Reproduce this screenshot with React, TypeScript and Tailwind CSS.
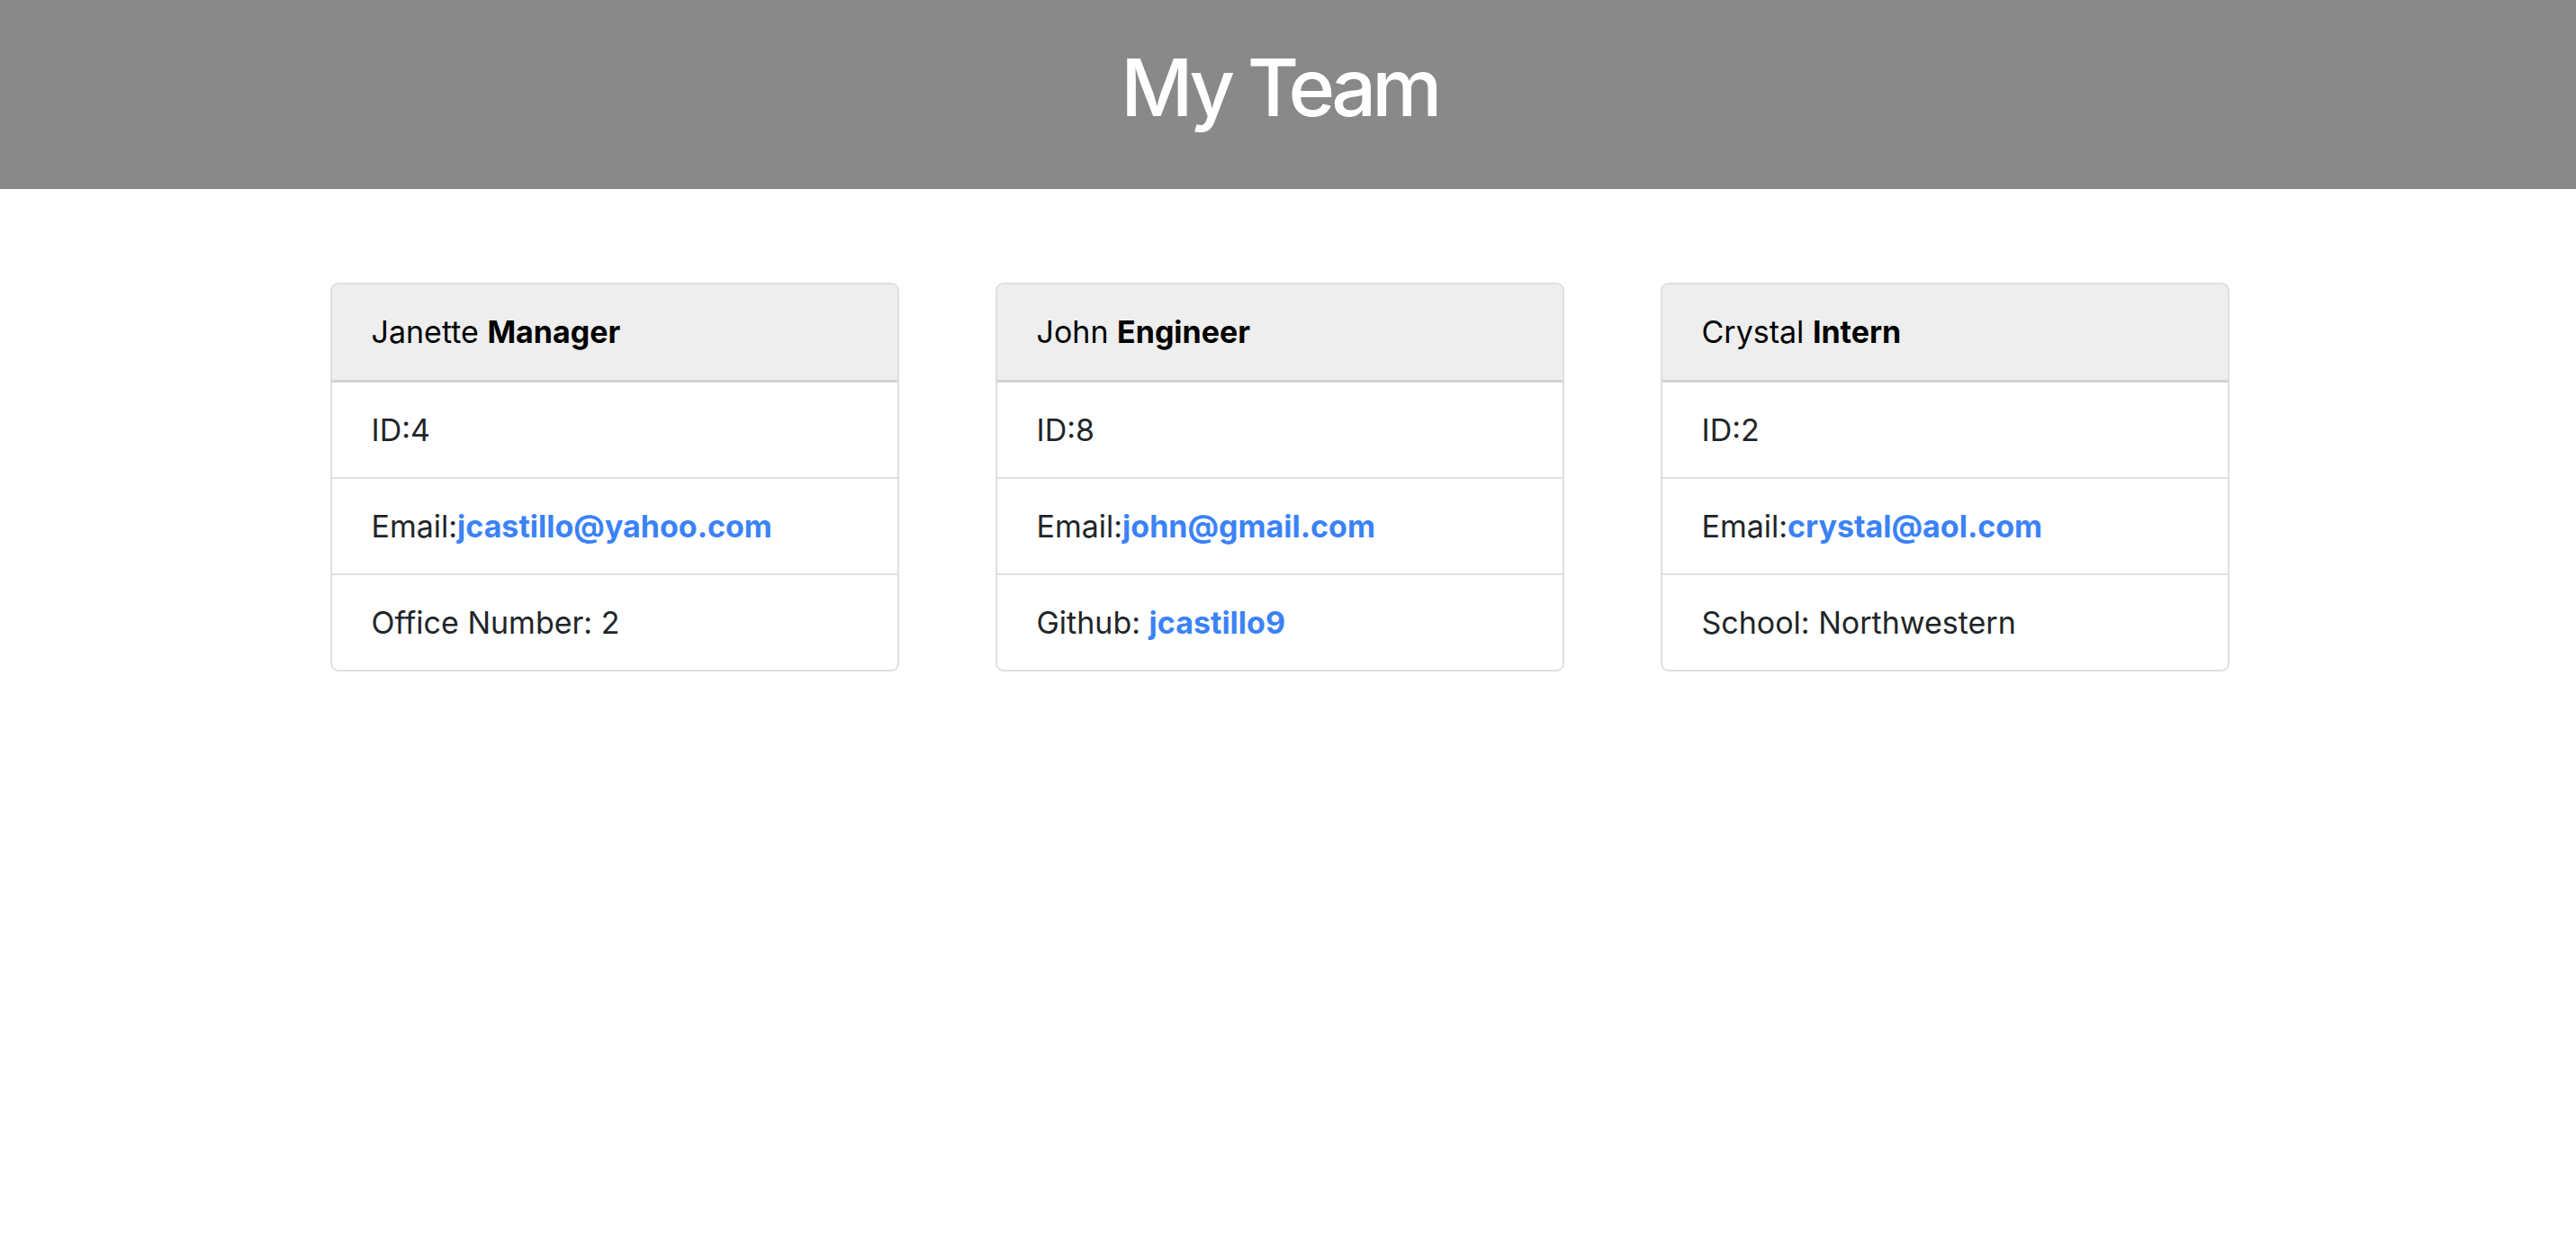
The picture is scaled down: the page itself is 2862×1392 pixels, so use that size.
import React from "react";

type Member = {
  name: string;
  role: string;
  id: string;
  email: string;
  extraLabel: string;
  extraValue: string;
  extraLink?: boolean;
};

const team: Member[] = [
  { name: "Janette", role: "Manager", id: "4", email: "jcastillo@yahoo.com", extraLabel: "Office Number: ", extraValue: "2" },
  { name: "John", role: "Engineer", id: "8", email: "john@gmail.com", extraLabel: "Github: ", extraValue: "jcastillo9", extraLink: true },
  { name: "Crystal", role: "Intern", id: "2", email: "crystal@aol.com", extraLabel: "School: ", extraValue: "Northwestern" },
];

function Card({ m }: { m: Member }) {
  return (
    <div className="w-[632px] border-2 border-[#dfdfdf] rounded-[9px] overflow-hidden bg-white">
      <div className="bg-[#eeeeee] border-b-[3px] border-[#d2d2d2] px-[44px] py-[28px] text-[34px] leading-[50px] text-black">
        {m.name} <span className="font-bold">{m.role}</span>
      </div>
      <div className="px-[44px] py-[27px] text-[34px] leading-[51px] text-[#212529] border-b-2 border-[#dfdfdf]">
        ID:{m.id}
      </div>
      <div className="px-[44px] py-[27px] text-[34px] leading-[51px] text-[#212529] border-b-2 border-[#dfdfdf]">
        Email:<a className="font-bold text-[#3b82f6]">{m.email}</a>
      </div>
      <div className="px-[44px] py-[27px] text-[34px] leading-[51px] text-[#212529]">
        {m.extraLabel}
        {m.extraLink ? <a className="font-bold text-[#3b82f6]">{m.extraValue}</a> : m.extraValue}
      </div>
    </div>
  );
}

export default function App() {
  return (
    <div className="min-h-screen bg-white" style={{ fontFamily: "Inter, 'Noto Sans', sans-serif" }}>
      <header className="h-[210px] bg-[#898989] flex items-center justify-center pr-[19px]">
        <h1 className="text-white text-[88px] font-medium leading-none tracking-[-0.055em] -mt-[16px]">My Team</h1>
      </header>
      <main className="pt-[104px] pr-[19px] flex justify-center gap-[107px]">
        {team.map((m) => (
          <Card key={m.name} m={m} />
        ))}
      </main>
    </div>
  );
}
